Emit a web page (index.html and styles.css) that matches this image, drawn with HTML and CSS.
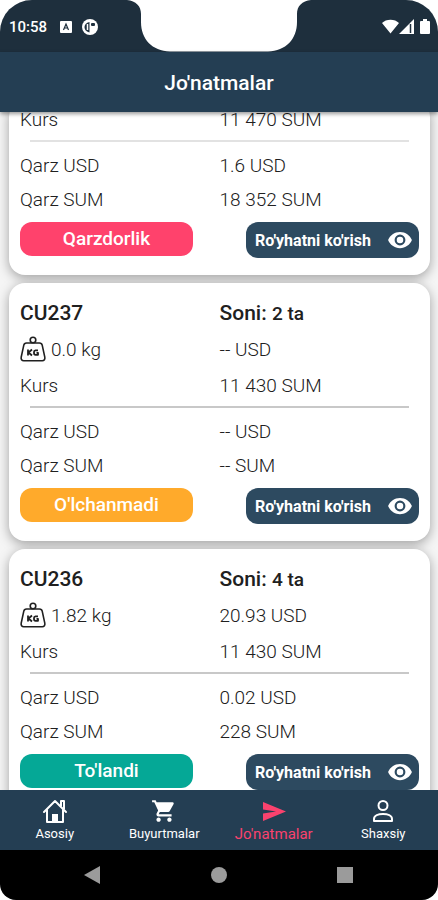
FILE: index.html
```html
<!DOCTYPE html>
<html lang="uz">
<head>
<meta charset="utf-8">
<meta name="viewport" content="width=device-width, initial-scale=1">
<title>Jo'natmalar</title>
<link rel="stylesheet" href="styles.css">
</head>
<body>
<svg class="defs" aria-hidden="true">
  <symbol id="eye" viewBox="0 0 24 24"><path fill="currentColor" d="M12 4.500C7 4.500 2.730 7.610 1 12c1.730 4.390 6 7.500 11 7.500s9.270-3.110 11-7.500c-1.730-4.390-6-7.500-11-7.500zM12 17a5 5 0 1 1 0-10 5 5 0 0 1 0 10zm0-8a3 3 0 1 0 0 6 3 3 0 0 0 0-6z"/></symbol>
  <symbol id="weight" viewBox="0 0 26 26"><g fill="none" stroke="currentColor" stroke-width="1.600" stroke-linejoin="round"><circle cx="13" cy="4" r="2.800"/><path d="M6.500 7h13c1.500 0 2.400.8 2.700 2.200l2.600 12c.4 2-.6 3.500-2.600 3.500H3.800c-2 0-3-1.500-2.600-3.500l2.600-12C4.100 7.800 5 7 6.500 7z"/><path stroke-width="1.800" d="M8 13.500v6M12 13.500l-3.500 3 3.500 3M18 14.300h-2.500c-1 0-1.500.7-1.500 1.600v1.200c0 1 .5 1.700 1.500 1.700H18v-2h-1.500"/></g></symbol>
</svg>
<div class="screen">
  <div class="status">
    <div class="status-left">
      <span class="clock">10:58</span>
      <svg class="status-app" viewBox="0 0 12 12" aria-hidden="true"><rect width="12" height="12" rx="1" fill="#fff"/><path d="M3.500 9 6 3l2.500 6M4.500 7h3" fill="none" stroke="#1e2f3d" stroke-width="1.200"/></svg>
      <svg class="status-disc" viewBox="0 0 16 16" aria-hidden="true"><circle cx="8" cy="8" r="8" fill="#fff"/><path d="M7.500 3v10.500C3.500 12.500 2.500 10 2.500 8S4 3.500 7.500 3z" fill="#1e2f3d"/><path d="M5.500 5v6" stroke="#fff" stroke-width="1.500"/><rect x="9" y="4" width="4" height="3" rx="1" fill="#1e2f3d"/></svg>
    </div>
    <svg class="notch" viewBox="0 0 184 52" aria-hidden="true"><path fill="#fff" d="M0 0C9 1 14 6 14 14v8c0 17 11 29 29 29.500h98c18-.5 29-12.500 29-29.500v-8c0-8 5-13 14-14z"/></svg>
    <div class="status-right">
      <svg class="signals" viewBox="0 0 48 16" aria-hidden="true"><path fill="#fff" d="M0 4C4-.5 13-.5 17 4L8.500 14.500zM32 0v15H17z"/><path d="M28.500 5v9" stroke="#1e2f3d" stroke-width="1.500"/><path fill="#fff" d="M39 2h2V0h4v2h2q1 0 1 1v11q0 1-1 1h-8q-1 0-1-1V3q0-1 1-1z"/></svg>
    </div>
  </div>
  <header class="header"><h1>Jo'natmalar</h1></header>

  <main class="list">
    <article class="card card-cut">
      <div class="row"><span>Kurs</span><span>11 470 SUM</span></div>
      <hr class="soft">
      <div class="row debt"><span>Qarz USD</span><span>1.6 USD</span></div>
      <div class="row debt"><span>Qarz SUM</span><span>18 352 SUM</span></div>
      <div class="actions">
        <span class="badge badge-debt">Qarzdorlik</span>
        <button class="view" type="button">Ro'yhatni ko'rish<svg aria-hidden="true"><use href="#eye"/></svg></button>
      </div>
    </article>

    <article class="card">
      <div class="row title"><h2>CU237</h2><span>Soni: <small>2 ta</small></span></div>
      <div class="row"><span class="mass"><svg aria-hidden="true"><use href="#weight"/></svg>0.0 kg</span><span>-- USD</span></div>
      <div class="row"><span>Kurs</span><span>11 430 SUM</span></div>
      <hr>
      <div class="row debt"><span>Qarz USD</span><span>-- USD</span></div>
      <div class="row debt"><span>Qarz SUM</span><span>-- SUM</span></div>
      <div class="actions">
        <span class="badge badge-wait">O'lchanmadi</span>
        <button class="view" type="button">Ro'yhatni ko'rish<svg aria-hidden="true"><use href="#eye"/></svg></button>
      </div>
    </article>

    <article class="card">
      <div class="row title"><h2>CU236</h2><span>Soni: <small>4 ta</small></span></div>
      <div class="row"><span class="mass"><svg aria-hidden="true"><use href="#weight"/></svg>1.82 kg</span><span>20.93 USD</span></div>
      <div class="row"><span>Kurs</span><span>11 430 SUM</span></div>
      <hr>
      <div class="row debt"><span>Qarz USD</span><span>0.02 USD</span></div>
      <div class="row debt"><span>Qarz SUM</span><span>228 SUM</span></div>
      <div class="actions">
        <span class="badge badge-paid">To'landi</span>
        <button class="view" type="button">Ro'yhatni ko'rish<svg aria-hidden="true"><use href="#eye"/></svg></button>
      </div>
    </article>
  </main>

  <nav class="tabs">
    <a href="#asosiy"><svg viewBox="0 0 26 26" aria-hidden="true"><path d="M2 14 13 3l11 11M19 8V3h3v8M5 12v12h16V12" fill="none" stroke="currentColor" stroke-width="2" stroke-linejoin="round" stroke-linecap="round"/><path d="M10 24v-8h6v8z" fill="currentColor"/></svg>Asosiy</a>
    <a href="#buyurtmalar"><svg viewBox="0 0 24 24" aria-hidden="true"><path fill="currentColor" d="M7 18c-1.100 0-2 .9-2 2s.9 2 2 2 2-.9 2-2-.9-2-2-2zM1 2v2h2l3.600 7.590-1.350 2.450C4.520 15.370 5.480 17 7 17h12v-2H7.420c-.14 0-.25-.11-.25-.25l.93-1.750h7.450c.75 0 1.410-.41 1.750-1.030l3.580-6.490C21.250 4.820 20.760 4 20 4H5.210l-.94-2H1zm16 16c-1.100 0-2 .9-2 2s.9 2 2 2 2-.9 2-2-.9-2-2-2z"/></svg>Buyurtmalar</a>
    <a class="active" href="#jonatmalar" aria-current="page"><svg viewBox="0 0 26 26" aria-hidden="true"><path fill="currentColor" d="M2 4l23 9.500L2 23v-7.500l13-2-13-2z"/></svg>Jo'natmalar</a>
    <a href="#shaxsiy"><svg viewBox="0 0 26 26" aria-hidden="true"><g fill="none" stroke="currentColor" stroke-width="2"><circle cx="13" cy="7.500" r="4.500"/><path d="M4 23v-2c0-3.500 4.500-5 9-5s9 1.500 9 5v2z" stroke-linejoin="round"/></g></svg>Shaxsiy</a>
  </nav>

  <div class="system">
    <button type="button" aria-label="Orqaga"><svg viewBox="0 0 20 20"><path d="M17 1v18L1 10z" fill="#9b9b9b"/></svg></button>
    <button type="button" aria-label="Bosh ekran"><svg viewBox="0 0 20 20"><circle cx="10" cy="10" r="8" fill="#9b9b9b"/></svg></button>
    <button type="button" aria-label="Oynalar"><svg viewBox="0 0 20 20"><path d="M2 2h16v16H2z" fill="#9b9b9b"/></svg></button>
  </div>
</div>
</body>
</html>
```
FILE: styles.css
```css
* { box-sizing: border-box; }

body {
  margin: 0;
  background: #fff;
  color: #202020;
  font-family: Roboto, "Liberation Sans", sans-serif;
}

h1, h2 { margin: 0; }

button {
  border: 0;
  padding: 0;
  font-family: inherit;
}

.defs {
  position: absolute;
  width: 0;
  height: 0;
}

.screen {
  display: flex;
  flex-direction: column;
  height: 100vh;
  overflow: hidden;
  border-radius: 32px 32px 16px 16px;
  background: #f5f5f5;
}

.status {
  display: grid;
  grid-template-columns: 1fr 184px 1fr;
  flex: none;
  height: 52px;
  background: #1e2f3d;
  color: #fff;
}

.status-left, .status-right {
  display: flex;
  align-items: center;
  padding: 2px 8px 0 9px;
}

.status-right { justify-content: flex-end; }

.clock {
  font-size: 15px;
  font-weight: 500;
}

.status-app {
  width: 12px;
  height: 12px;
  margin: 0 10px 0 13px;
}

.status-disc {
  width: 16px;
  height: 16px;
}

.signals {
  width: 48px;
  height: 16px;
}

.notch {
  width: 184px;
  height: 52px;
}

.header {
  display: flex;
  align-items: center;
  justify-content: center;
  flex: none;
  z-index: 1;
  height: 60px;
  padding-top: 2px;
  background: #243e53;
  box-shadow: 0 2px 4px rgba(0, 0, 0, .4);
  color: #fff;
}

.header h1 {
  font-size: 21px;
  font-weight: 500;
}

.list {
  display: flex;
  flex: 1;
  flex-direction: column;
  gap: 8px;
  min-height: 0;
  overflow: hidden;
  padding: 0 8px 0 9px;
}

.card {
  flex: none;
  padding: 12px 11px 17px;
  border-radius: 16px;
  background: #fff;
  box-shadow: 0 3px 12px rgba(0, 0, 0, .35);
}

.card-cut {
  margin-top: -11px;
  padding-top: 0;
}

.row {
  display: grid;
  grid-template-columns: 1fr 1fr;
  align-items: center;
  height: 36px;
  font-size: 19px;
  font-weight: 300;
}

.debt { height: 34px; }

.title, .title h2 {
  font-size: 21px;
  font-weight: 500;
}

.title small { font-size: 19px; }

.mass {
  display: flex;
  align-items: center;
  gap: 5px;
}

.mass svg {
  width: 26px;
  height: 26px;
}

hr {
  height: 2px;
  margin: 3px 10px 6px;
  border: 0;
  background: #c8c8c8;
}

hr.soft { background: #e2e2e2; }

.actions {
  display: flex;
  align-items: flex-start;
  justify-content: space-between;
  padding-top: 6px;
}

.badge {
  width: 173px;
  border-radius: 12px;
  color: #fff;
  font-size: 19px;
  font-weight: 500;
  line-height: 34px;
  text-align: center;
}

.badge-debt { background: #ff426c; }
.badge-wait { background: #ffaa2b; }
.badge-paid { background: #05a896; }

.view {
  display: flex;
  align-items: center;
  justify-content: space-between;
  width: 173px;
  height: 36px;
  padding: 0 6px 0 9px;
  border-radius: 12px;
  background: #2d4a60;
  color: #fff;
  font-size: 16px;
  font-weight: 700;
}

.view svg {
  width: 26px;
  height: 26px;
}

.tabs {
  display: grid;
  grid-template-columns: repeat(4, 1fr);
  flex: none;
  z-index: 1;
  height: 60px;
  background: #243e53;
}

.tabs a {
  display: flex;
  align-items: center;
  flex-direction: column;
  padding-top: 8px;
  color: #fff;
  font-size: 13px;
  line-height: 20px;
  text-decoration: none;
}

.tabs svg {
  width: 26px;
  height: 26px;
}

.tabs .active {
  color: #fa426e;
  font-size: 15px;
}

.system {
  display: flex;
  align-items: center;
  justify-content: center;
  gap: 106px;
  flex: none;
  height: 50px;
  background: #000;
}

.system button {
  width: 20px;
  height: 20px;
  background: none;
}

.system svg {
  display: block;
  width: 20px;
  height: 20px;
}
```
